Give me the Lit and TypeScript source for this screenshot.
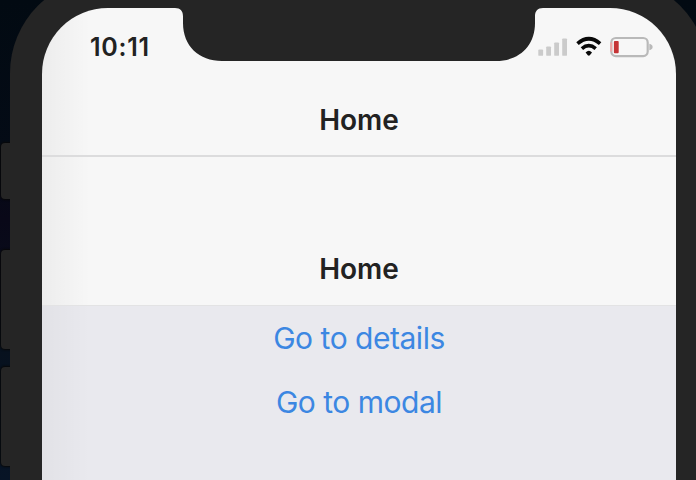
import { LitElement, html, css, svg } from "lit";
import { customElement, property } from "lit/decorators.js";

@customElement("status-bar")
class StatusBar extends LitElement {
  static styles = css`
    :host {
      display: flex;
      justify-content: space-between;
      align-items: flex-start;
      height: 74px;
      box-sizing: border-box;
    }
    .time {
      width: 141px;
      flex: none;
      padding: 25px 0 0 48px;
      box-sizing: border-box;
      font-size: 25px;
      line-height: 29px;
      font-weight: 600;
      letter-spacing: 0.75px;
      color: #222;
      white-space: nowrap;
    }
    .notch {
      flex: none;
      display: block;
      margin-left: -8px;
      margin-right: -8px;
    }
    .icons {
      flex: none;
      display: block;
      width: 141px;
      height: 74px;
    }
  `;

  render() {
    const bars = [
      [3.3, 41.6, 6.2],
      [11.2, 38.4, 9.4],
      [19.2, 34.4, 13.4],
      [27.2, 30.4, 17.4],
    ];
    return html`
      <div class="time">10:11</div>
      <svg class="notch" width="368" height="54" viewBox="0 0 368 54">
        <path
          d="M0 0C5.500 0 8 3 8 8.500V15C8 38 24 53 47 53H321C344 53 360 38 360 15V8.500C360 3 362.500 0 368 0Z"
          fill="#252525"
        />
      </svg>
      <svg class="icons" viewBox="0 0 141 74">
        ${bars.map(
          ([x, y, h]) =>
            svg`<rect x=${x} y=${y} width="4.800" height=${h} rx="0.900" fill="#cbcbcb" />`
        )}
        <g fill="none" stroke="#090909" stroke-width="3.700">
          <path d="M42.500 35.700Q53.800 25.800 65.100 35.700" />
          <path d="M46.900 40.600Q53.800 34.700 60.700 40.600" />
        </g>
        <path d="M50.600 44.500Q53.800 40.900 57 44.500L54.800 47.200Q53.800 48.100 52.800 47.200Z" fill="#090909" />
        <rect x="76.300" y="30" width="36.400" height="18.100" rx="4.500" fill="none" stroke="#b9b9b9" stroke-width="2.200" />
        <path d="M76.200 34.500V43.600" fill="none" stroke="#efa5a5" stroke-width="2" />
        <rect x="78.900" y="33" width="4.800" height="12.200" rx="0.900" fill="#c53436" />
        <path d="M114.300 35.800Q117.600 36.500 117.600 39Q117.600 41.500 114.300 42.200Z" fill="#b9b9b9" />
      </svg>
    `;
  }
}

@customElement("nav-header")
class NavHeader extends LitElement {
  @property() heading = "";

  static styles = css`
    :host {
      display: flex;
      justify-content: center;
      align-items: flex-end;
      box-sizing: border-box;
      padding-bottom: 18px;
      border-bottom: 2px solid #dcdcdd;
      font-size: 28px;
      line-height: 34px;
      font-weight: 600;
      letter-spacing: -0.1px;
      color: #222;
    }
  `;

  render() {
    return html`<span>${this.heading}</span>`;
  }
}

@customElement("app-root")
class AppRoot extends LitElement {
  static styles = css`
    :host {
      display: block;
      position: relative;
      width: 696px;
      height: 480px;
      overflow: hidden;
      background: linear-gradient(#020a12 0, #040b16 150px, #090818 220px, #07111e 350px, #071426 480px);
      font-family: Inter, "Liberation Sans", sans-serif;
    }
    .key {
      position: absolute;
      left: 1px;
      width: 18px;
      border-radius: 4px;
      background: #252525;
      box-shadow: 0 0 2px 1px #080808;
    }
    .mute {
      top: 143px;
      height: 56px;
    }
    .up {
      top: 250px;
      height: 99px;
    }
    .down {
      top: 367px;
      height: 99px;
    }
    .body {
      position: relative;
      width: 698px;
      height: 620px;
      margin-left: 10px;
      margin-top: -22px;
      box-sizing: border-box;
      padding: 30px 32px 0;
      border-radius: 95px 95px 0 0;
      background: #252525;
    }
    .screen {
      display: flex;
      flex-direction: column;
      height: 590px;
      border-radius: 66px 66px 0 0;
      overflow: hidden;
      background: linear-gradient(90deg, rgba(0, 0, 0, 0.045), transparent 48px), #f7f7f7;
    }
    .outer {
      height: 75px;
    }
    .inner {
      height: 149px;
      border-bottom-color: #e3e3e4;
      border-bottom-width: 1px;
      padding-bottom: 19px;
    }
    .content {
      flex: 1;
      display: flex;
      flex-direction: column;
      align-items: center;
      gap: 28px;
      padding-top: 14px;
      background: linear-gradient(90deg, rgba(0, 0, 0, 0.03), transparent 48px), #e9e9ee;
    }
    .link {
      font-size: 30px;
      line-height: 36px;
      letter-spacing: -0.48px;
      color: #3c87e2;
      white-space: nowrap;
    }
  `;

  render() {
    return html`
      <div class="key mute"></div>
      <div class="key up"></div>
      <div class="key down"></div>
      <div class="body">
        <div class="screen">
          <status-bar></status-bar>
          <nav-header class="outer" heading="Home"></nav-header>
          <nav-header class="inner" heading="Home"></nav-header>
          <div class="content">
            <div class="link">Go to details</div>
            <div class="link">Go to modal</div>
          </div>
        </div>
      </div>
    `;
  }
}
